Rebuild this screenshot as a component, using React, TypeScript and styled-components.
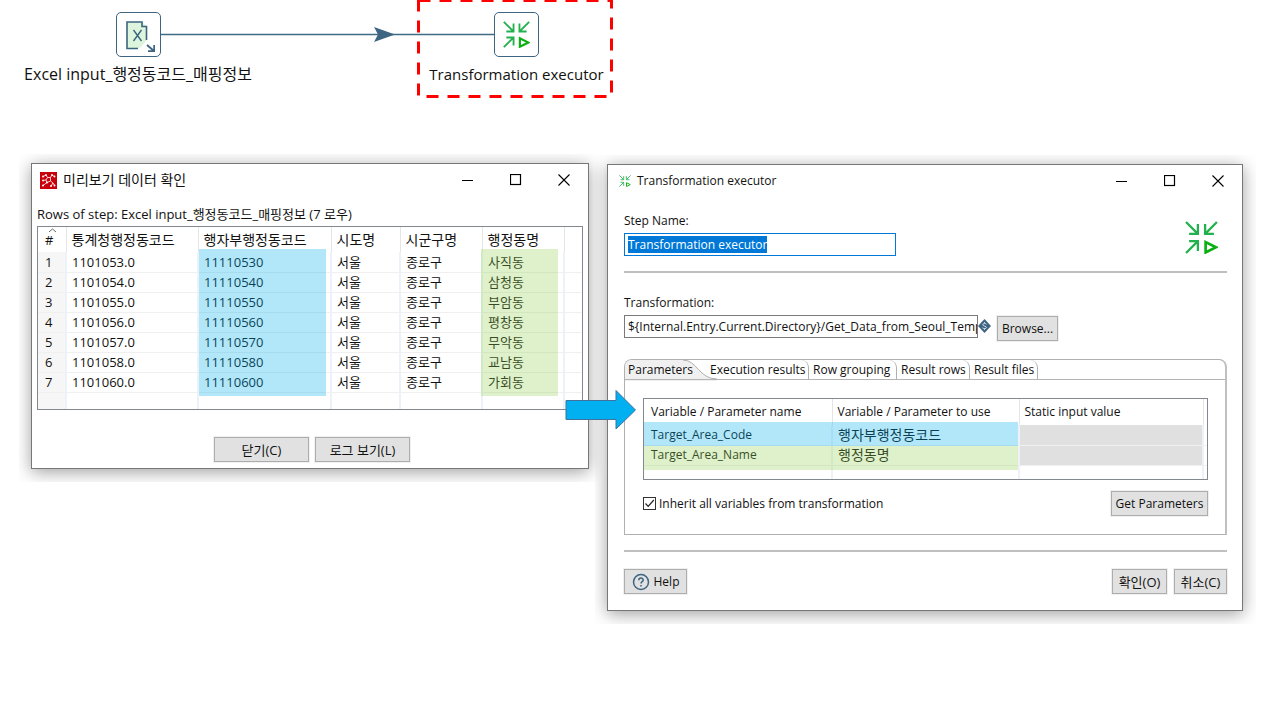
import React, { useEffect, useRef } from "react";
import styled, { createGlobalStyle } from "styled-components";

const GlobalStyle = createGlobalStyle`
  *, *::before, *::after { box-sizing: border-box; }
  body {
    margin: 0;
    background: #fff;
    color: #111;
    font-family: "Open Sans", "Noto Sans CJK KR", sans-serif;
    font-size: 12px;
    line-height: 16px;
  }
  button, input { font: inherit; color: inherit; margin: 0; }
`;

const Page = styled.main`
  min-height: 100vh;
  overflow: hidden;
`;

/* Flow diagram */

const Canvas = styled.section`
  position: relative;
  height: 163px;
`;

const Node = styled.div<{ $left: number; $width: number; $size: number }>`
  position: absolute;
  left: ${(p) => p.$left}px;
  top: 12px;
  width: ${(p) => p.$width}px;
  display: flex;
  flex-direction: column;
  align-items: center;
  gap: 7px;
  font-size: ${(p) => p.$size}px;
  line-height: 20px;
  white-space: nowrap;
`;

const NodeIcon = styled.div`
  width: 45px;
  height: 45px;
  display: flex;
  align-items: center;
  justify-content: center;
  background: #fff;
  border: 1px solid #3d6480;
  border-radius: 5px;
`;

const Hop = styled.svg`
  position: absolute;
  left: 160px;
  top: 24px;
`;

const Marker = styled.svg`
  position: absolute;
  left: 417px;
  top: 0;
`;

/* Windows */

const Desktop = styled.section`
  display: grid;
  grid-template-columns: 558fr 636fr;
  gap: 18px;
  align-items: start;
  padding: 0 37px 0 31px;
`;

const Slot = styled.div<{ $top?: number }>`
  position: relative;
  min-width: 0;
  padding-top: ${(p) => p.$top ?? 0}px;
`;

const Window = styled.section`
  display: flex;
  flex-direction: column;
  background: #fff;
  border: 1px solid #777;
  box-shadow: 0 3px 16px rgba(0, 0, 0, 0.38);
  clip-path: inset(-9px -13px -13px -12px);
`;

const TitleBar = styled.header<{ $inset: number }>`
  display: flex;
  align-items: center;
  height: 32px;
  padding-left: ${(p) => p.$inset}px;
`;

const Title = styled.h1<{ $size: number }>`
  flex: 1;
  margin: 0 0 0 6px;
  font-size: ${(p) => p.$size}px;
  line-height: 20px;
  font-weight: 400;
`;

const Control = styled.button`
  width: 48px;
  height: 32px;
  padding: 0;
  border: 0;
  background: none;
  display: flex;
  align-items: center;
  justify-content: center;
`;

const PushButton = styled.button<{ $width: number; $size?: number }>`
  width: ${(p) => p.$width}px;
  height: 25px;
  padding: 0;
  display: flex;
  align-items: center;
  justify-content: center;
  gap: 4px;
  background: #e1e1e1;
  border: 1px solid #adadad;
  outline: 1px solid #f0f0f0;
  font-size: ${(p) => p.$size ?? 12}px;
  white-space: nowrap;
`;

const PreviewBody = styled.div`
  padding: 8px 5px 6px;
`;

const Caption = styled.p`
  margin: 0;
  font-size: 13px;
  line-height: 20px;
  height: 22px;
  white-space: nowrap;
`;

const GridFrame = styled.div<{ $height: number }>`
  position: relative;
  height: ${(p) => p.$height}px;
  border: 1px solid #828790;
  overflow: hidden;
`;

const Grid = styled.table<{ $size: number; $head: number; $inset: number }>`
  width: 100%;
  table-layout: fixed;
  border-collapse: collapse;
  font-size: ${(p) => p.$size}px;
  line-height: 16px;

  th, td {
    padding: 0 0 0 5px;
    text-align: left;
    font-weight: 400;
    white-space: nowrap;
    border-right: 2px solid #edf2f8;
  }
  th {
    height: ${(p) => p.$head}px;
    border-right: 1px solid #e5e5e5;
  }
  td { height: 20px; border-bottom: 1px solid #f0f0f0; }
  th:first-child, td:first-child { padding-left: ${(p) => p.$inset}px; }
  th:last-child, td:last-child { border-right: 0; }
`;

const KoreanHead = styled.th`
  font-size: 14px;
`;

const KoreanCell = styled.td`
  font-size: 14px;
`;

const RowNumber = styled.td`
  background: #f6f6f6;
`;

const IndexHead = styled.th`
  position: relative;
`;

const SortMark = styled.svg`
  position: absolute;
  left: 10px;
  top: 1px;
`;

const Highlight = styled.div<{ $left: number; $top: number; $width: number; $height: number; $tone: "blue" | "green" }>`
  position: absolute;
  left: ${(p) => p.$left}px;
  top: ${(p) => p.$top}px;
  width: ${(p) => p.$width}px;
  height: ${(p) => p.$height}px;
  background: ${(p) => (p.$tone === "blue" ? "rgba(0, 176, 240, 0.3)" : "rgba(146, 208, 80, 0.3)")};
  pointer-events: none;
`;

const CenterButtons = styled.div`
  display: flex;
  justify-content: center;
  gap: 6px;
  padding-top: 27px;
  padding-left: 4px;
`;

const ExecutorBody = styled.div`
  display: flex;
  flex-direction: column;
  padding: 16px 15px 16px 16px;
`;

const NameRow = styled.div`
  display: flex;
  justify-content: space-between;
  align-items: flex-start;
  padding-right: 9px;
  height: 58px;
`;

const StepIcon = styled.div`
  padding-top: 8px;
`;

const Field = styled.div`
  display: flex;
  flex-direction: column;
  gap: 4px;
`;

const TextInput = styled.input<{ $width: number; $active?: boolean }>`
  width: ${(p) => p.$width}px;
  height: 23px;
  padding: 0 0 0 3px;
  background: #fff;
  border: 1px solid ${(p) => (p.$active ? "#0078d7" : "#7a7a7a")};
  border-radius: 0;
  outline: none;
  caret-color: transparent;
  &::selection { background: #0078d7; color: #fff; }
`;

const Rule = styled.hr`
  width: 100%;
  height: 2px;
  margin: 0;
  border: 0;
  background: #bfbfbf;
`;

const FooterRule = styled(Rule)`
  margin-top: 15px;
`;

const PathField = styled(Field)`
  padding-top: 22px;
`;

const PathRow = styled.div`
  display: flex;
  align-items: flex-start;
`;

const PathButton = styled.div`
  padding: 1px 0 0 6px;
`;

const VariableIcon = styled.svg`
  margin-top: 4px;
`;

const TabFolder = styled.section`
  position: relative;
  z-index: 0;
  margin-top: 18px;
  height: 176px;
  border: 1px solid #b0b0b0;
  border-right: 2px solid #c0c0c0;
  border-radius: 8px 8px 0 0;
`;

const TabList = styled.div`
  display: flex;
  height: 20px;
  border-bottom: 1px solid #b4b4b4;
`;

const Tab = styled.button<{ $width: number }>`
  width: ${(p) => p.$width}px;
  height: 19px;
  padding: 0 0 0 4px;
  text-align: left;
  white-space: nowrap;
  background: none;
  border: 0;
  border-right: 1px solid #b0b0b0;
  border-top-right-radius: 8px;
`;

const ActiveTab = styled.button`
  position: relative;
  width: 81px;
  height: 21px;
  padding: 0 0 2px 3px;
  text-align: left;
  background: none;
  border: 0;
`;

const TabShape = styled.svg`
  position: absolute;
  left: 0;
  top: -1px;
  z-index: -1;
`;

const TabPanel = styled.div`
  padding: 18px 17px 0 18px;
`;

const LockedCell = styled.td`
  background: #e0e0e0;
`;

const PanelFooter = styled.div`
  display: flex;
  justify-content: space-between;
  align-items: center;
  padding-top: 11px;
`;

const CheckLabel = styled.label`
  display: flex;
  align-items: center;
  gap: 3px;
`;

const CheckBox = styled.input`
  appearance: none;
  width: 13px;
  height: 13px;
  border: 1px solid #333;
  background: #fff url("data:image/svg+xml,%3Csvg xmlns='http://www.w3.org/2000/svg' viewBox='0 0 11 11'%3E%3Cpath d='M1.5 5.5 4.2 8.3 9.8 2' fill='none' stroke='%23222' stroke-width='1.2'/%3E%3C/svg%3E") center / 11px 11px;
`;

const Actions = styled.footer`
  display: flex;
  align-items: center;
  gap: 7px;
  padding-top: 17px;
`;

const Spacer = styled.div`
  flex: 1;
`;

const FlowArrow = styled.svg`
  position: absolute;
  left: -42px;
  top: 226px;
`;

const ExecutorMark = ({ size }: { size: number }) => (
  <svg width={size} height={size} viewBox="0 0 32 32" fill="none" strokeWidth="2.2" aria-hidden="true">
    <g stroke="#22b14c">
      <path d="M1 1 12 12M12.500 3v9.500H4" />
      <path d="M31 1 20 12M19.500 3v9.500H28" />
      <path d="M1 31 12 20M4 19.500h8.500V29" />
    </g>
    <path d="M20 20.500v10L30 25.500Z" stroke="#0db014" strokeWidth="2.6" />
  </svg>
);

const WindowControls = () => (
  <>
    <Control aria-label="Minimize">
      <svg width="12" height="12"><path d="M0 6.500h11" stroke="#000" /></svg>
    </Control>
    <Control aria-label="Maximize">
      <svg width="12" height="12"><rect x=".5" y=".5" width="10" height="10" fill="none" stroke="#000" strokeWidth="1.2" /></svg>
    </Control>
    <Control aria-label="Close">
      <svg width="12" height="12"><path d="m.5.5 11 11m0-11-11 11" stroke="#000" strokeWidth="1.1" /></svg>
    </Control>
  </>
);

const rows = [
  ["1101053.0", "11110530", "서울", "종로구", "사직동"],
  ["1101054.0", "11110540", "서울", "종로구", "삼청동"],
  ["1101055.0", "11110550", "서울", "종로구", "부암동"],
  ["1101056.0", "11110560", "서울", "종로구", "평창동"],
  ["1101057.0", "11110570", "서울", "종로구", "무악동"],
  ["1101058.0", "11110580", "서울", "종로구", "교남동"],
  ["1101060.0", "11110600", "서울", "종로구", "가회동"],
];

const PreviewWindow = () => (
  <Window>
    <TitleBar $inset={8}>
      <svg width="17" height="17" viewBox="0 0 17 17" aria-hidden="true">
        <path fill="#c8000a" d="M0 0h17v17H0z" />
        <g stroke="#fff" fill="none" strokeWidth=".8">
          <path d="M3 4.500 6 3l1.500 2.500h3L12 3l2.500 1.500M7.500 5.500 6 8l-3 .5M10.500 5.500V9l2.500 2M6 8l1 2.500L3 13.500M7 10.500l3.500-1.500M13 11l-2 3M13 11l1.500 2.500" />
        </g>
        <g fill="#fff">
          <circle cx="3" cy="4.500" r=".9" /><circle cx="6" cy="3" r=".9" /><circle cx="12" cy="3" r=".9" />
          <circle cx="14.500" cy="4.500" r=".9" /><circle cx="3" cy="8.500" r=".9" /><circle cx="3" cy="13.500" r="1" />
          <circle cx="11" cy="14" r="1" /><circle cx="14.500" cy="13.500" r="1" /><circle cx="7" cy="10.500" r="1" />
        </g>
      </svg>
      <Title $size={14}>미리보기 데이터 확인</Title>
      <WindowControls />
    </TitleBar>
    <PreviewBody>
      <Caption>Rows of step: Excel input_행정동코드_매핑정보 (7 로우)</Caption>
      <GridFrame $height={184}>
        <Grid $size={13} $head={25} $inset={7}>
          <colgroup>
            <col width="28" /><col width="132" /><col width="133" /><col width="69" />
            <col width="82" /><col width="82" /><col />
          </colgroup>
          <thead>
            <tr>
              <IndexHead>
                #
                <SortMark width="9" height="5"><path d="m1 4 3.500-3L8 4" fill="none" stroke="#666" /></SortMark>
              </IndexHead>
              <KoreanHead>통계청행정동코드</KoreanHead>
              <KoreanHead>행자부행정동코드</KoreanHead>
              <KoreanHead>시도명</KoreanHead>
              <KoreanHead>시군구명</KoreanHead>
              <KoreanHead>행정동명</KoreanHead>
              <th />
            </tr>
          </thead>
          <tbody>
            {rows.map(([code, ministry, city, district, dong], i) => (
              <tr key={code}>
                <RowNumber>{i + 1}</RowNumber>
                <td>{code}</td>
                <td>{ministry}</td>
                <td>{city}</td>
                <td>{district}</td>
                <td>{dong}</td>
                <td />
              </tr>
            ))}
            <tr><RowNumber /><td /><td /><td /><td /><td /><td /></tr>
          </tbody>
        </Grid>
        <Highlight $tone="blue" $left={161} $top={22} $width={127} $height={147} />
        <Highlight $tone="green" $left={443} $top={22} $width={77} $height={147} />
      </GridFrame>
      <CenterButtons>
        <PushButton $width={95} $size={13}>닫기(C)</PushButton>
        <PushButton $width={95} $size={13}>로그 보기(L)</PushButton>
      </CenterButtons>
    </PreviewBody>
  </Window>
);

const ExecutorWindow = () => {
  const nameRef = useRef<HTMLInputElement>(null);
  useEffect(() => {
    nameRef.current?.focus();
    nameRef.current?.select();
  }, []);

  return (
    <Window>
      <TitleBar $inset={11}>
        <ExecutorMark size={12} />
        <Title $size={12}>Transformation executor</Title>
        <WindowControls />
      </TitleBar>
      <ExecutorBody>
        <NameRow>
          <Field>
            <label htmlFor="step-name">Step Name:</label>
            <TextInput id="step-name" ref={nameRef} $width={272} $active defaultValue="Transformation executor" />
          </Field>
          <StepIcon><ExecutorMark size={33} /></StepIcon>
        </NameRow>
        <Rule />
        <PathField>
          <label htmlFor="transformation">Transformation:</label>
          <PathRow>
            <TextInput id="transformation" $width={354} defaultValue="${Internal.Entry.Current.Directory}/Get_Data_from_Seoul_Temp" />
            <VariableIcon width="13" height="14" viewBox="0 0 13 14" aria-hidden="true">
              <path d="M6.500 0 13 7l-6.500 7L0 7Z" fill="#3d6480" />
              <path d="M8.500 5.200C7.800 4.200 4.800 4.200 4.800 5.700S8.400 7 8.400 8.500 5.200 9.800 4.500 8.800M6.500 3.200v1M6.500 9.800v1" fill="none" stroke="#dfe8ee" />
            </VariableIcon>
            <PathButton><PushButton $width={61}>Browse...</PushButton></PathButton>
          </PathRow>
        </PathField>
        <TabFolder>
          <TabList role="tablist">
            <ActiveTab role="tab" aria-selected="true">
              <TabShape width="94" height="23">
                <path d="M0 22V8Q0 1 7 1H58C72 1 74 20 92 20V22Z" fill="#f0f0f0" />
                <path d="M58 1C72 1 74 20 92 20" fill="none" stroke="#b0b0b0" />
              </TabShape>
              Parameters
            </ActiveTab>
            <Tab role="tab" $width={103}>Execution results</Tab>
            <Tab role="tab" $width={88}>Row grouping</Tab>
            <Tab role="tab" $width={73}>Result rows</Tab>
            <Tab role="tab" $width={68}>Result files</Tab>
          </TabList>
          <TabPanel role="tabpanel">
            <GridFrame $height={82}>
              <Grid $size={12} $head={26} $inset={7}>
                <colgroup><col width="188" /><col width="187" /><col width="184" /><col /></colgroup>
                <thead>
                  <tr><th>Variable / Parameter name</th><th>Variable / Parameter to use</th><th>Static input value</th><th /></tr>
                </thead>
                <tbody>
                  <tr><td>Target_Area_Code</td><KoreanCell>행자부행정동코드</KoreanCell><LockedCell /><td /></tr>
                  <tr><td>Target_Area_Name</td><KoreanCell>행정동명</KoreanCell><LockedCell /><td /></tr>
                  <tr><td /><td /><td /><td /></tr>
                </tbody>
              </Grid>
              <Highlight $tone="blue" $left={0} $top={23} $width={374} $height={24} />
              <Highlight $tone="green" $left={0} $top={47} $width={374} $height={24} />
            </GridFrame>
            <PanelFooter>
              <CheckLabel>
                <CheckBox type="checkbox" defaultChecked />
                Inherit all variables from transformation
              </CheckLabel>
              <PushButton $width={97}>Get Parameters</PushButton>
            </PanelFooter>
          </TabPanel>
        </TabFolder>
        <FooterRule />
        <Actions>
          <PushButton $width={63}>
            <svg width="18" height="18" viewBox="0 0 18 18" fill="none" stroke="#3d6480" aria-hidden="true">
              <circle cx="9" cy="9" r="7.500" strokeWidth="1.500" />
              <path d="M6.800 7.300c0-3 4.400-2.800 4.400-.3 0 1.700-2.200 1.700-2.200 3.500M9 12v1.500" strokeWidth="1.500" />
            </svg>
            Help
          </PushButton>
          <Spacer />
          <PushButton $width={55} $size={13}>확인(O)</PushButton>
          <PushButton $width={53} $size={13}>취소(C)</PushButton>
        </Actions>
      </ExecutorBody>
    </Window>
  );
};

export default function App() {
  return (
    <Page>
      <GlobalStyle />
      <Canvas>
        <Hop width="335" height="22" aria-hidden="true">
          <path d="M0 10.500h335" stroke="#3f6b84" strokeWidth="1.500" />
          <path d="m214 3 21 7.500-21 7.500 4-7.500Z" fill="#3d6480" />
        </Hop>
        <Node $left={22} $width={232} $size={16}>
          <NodeIcon>
            <svg width="34" height="34" viewBox="0 0 34 34" fill="none" stroke="#3d6480" aria-hidden="true">
              <path d="M6 4h15l5 4.500V22l-7 8H6Z" fill="#dcf5dc" stroke="none" />
              <path d="M17 30.500H6V4h15v4.500h4.500V22" strokeWidth="1.600" />
              <path d="m12.500 12 8 11m0-11-8 11" strokeWidth="1.400" />
              <path d="m26 27 7 6M33.200 27v6.200H27" strokeWidth="1.800" />
            </svg>
          </NodeIcon>
          Excel input_행정동코드_매핑정보
        </Node>
        <Node $left={430} $width={173} $size={15}>
          <NodeIcon><ExecutorMark size={27} /></NodeIcon>
          Transformation executor
        </Node>
        <Marker width="197" height="98" aria-hidden="true">
          <rect x="1.500" y=".5" width="193" height="96" fill="none" stroke="#f00" strokeWidth="3" strokeDasharray="12 9" />
        </Marker>
      </Canvas>
      <Desktop>
        <Slot><PreviewWindow /></Slot>
        <Slot $top={1}>
          <ExecutorWindow />
          <FlowArrow width="72" height="42" aria-hidden="true">
            <path d="M1 11.500h50V1.500L70.500 21 51 40V30.500H1Z" fill="#00b0f0" stroke="#41719c" />
          </FlowArrow>
        </Slot>
      </Desktop>
    </Page>
  );
}
